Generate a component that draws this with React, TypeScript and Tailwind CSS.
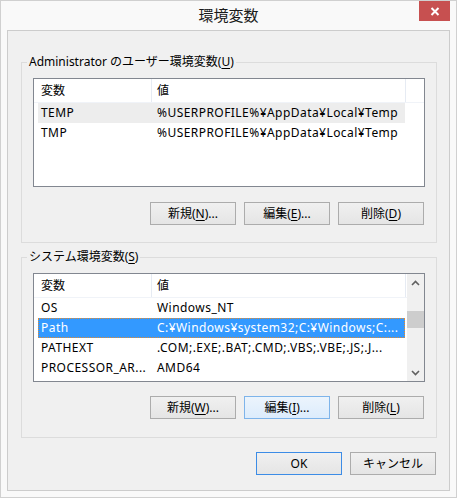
import React from 'react';

const font = { fontFamily: '"Noto Sans", "Noto Sans CJK JP", sans-serif' };

type Row = { name: string; value: string };

const userVars: Row[] = [
  { name: 'TEMP', value: '%USERPROFILE%¥AppData¥Local¥Temp' },
  { name: 'TMP', value: '%USERPROFILE%¥AppData¥Local¥Temp' },
];

const systemVars: Row[] = [
  { name: 'OS', value: 'Windows_NT' },
  { name: 'Path', value: 'C:¥Windows¥system32;C:¥Windows;C:...' },
  { name: 'PATHEXT', value: '.COM;.EXE;.BAT;.CMD;.VBS;.VBE;.JS;.J...' },
  { name: 'PROCESSOR_AR...', value: 'AMD64' },
  { name: 'PROCESSOR_ID...', value: 'Intel64 Family 6 Model 58 Stepping 9, ...' },
];

const Mn = ({ children }: { children: React.ReactNode }) => <span className="underline underline-offset-2">{children}</span>;

function Btn({ children, hover, primary }: { children: React.ReactNode; hover?: boolean; primary?: boolean }) {
  const look = hover
    ? 'border-[#7eb4ea] bg-gradient-to-b from-[#ecf4fc] to-[#dcecfc]'
    : primary
    ? 'border-[#3c8ce6] bg-gradient-to-b from-[#f0f0f0] to-[#e5e5e5]'
    : 'border-[#acacac] bg-gradient-to-b from-[#f0f0f0] to-[#e5e5e5]';
  return (
    <div className={`w-[86px] h-[23px] border ${look} flex items-center justify-center text-[12px] text-black`}>
      <span>{children}</span>
    </div>
  );
}

function GroupBox({ label, children, pb, gap }: { label: React.ReactNode; children: React.ReactNode; pb: string; gap: string }) {
  return (
    <div className={`relative border border-[#dcdcdc] px-[11px] pt-[15px] ${pb} flex flex-col ${gap}`}>
      <div className="absolute left-[5px] top-[-9px] bg-[#f0f0f0] px-[2px] leading-[16px] text-[12px] text-black">{label}</div>
      {children}
    </div>
  );
}

function Chevron({ up }: { up?: boolean }) {
  return (
    <svg width="9" height="6" viewBox="0 0 9 6">
      <path d={up ? 'M1 5 L4.5 1.5 L8 5' : 'M1 1 L4.5 4.5 L8 1'} fill="none" stroke="#606060" strokeWidth="1.6" />
    </svg>
  );
}

function ListView({ rows, selected, scroll }: { rows: Row[]; selected?: number; scroll?: boolean }) {
  return (
    <div className="h-[109px] border border-[#828790] bg-white flex overflow-hidden">
      <div className="flex-1 flex flex-col overflow-hidden">
        <div className="h-[24px] shrink-0 flex border-b border-[#f0f3f8] text-[12px] text-black">
          <div className="w-[118px] border-r border-[#e6ebf3] pl-[7px] flex items-center">変数</div>
          <div className="w-[254px] border-r border-[#e6ebf3] pl-[5px] flex items-center">値</div>
        </div>
        {rows.map((r, i) => {
          const sel = i === selected;
          const gray = !scroll && i === 0;
          return (
            <div
              key={r.name}
              className={`h-[20px] shrink-0 ml-[4px] w-[367px] flex items-center text-[12px] tracking-[0.45px] whitespace-nowrap ${
                sel ? 'bg-[#3399ff] text-white outline-1 outline-dotted outline-[#e38a2e] -outline-offset-1' : gray ? 'bg-[#ededed] text-black' : 'text-black'
              }`}
            >
              <div className="w-[114px] pl-[3px] overflow-hidden">{r.name}</div>
              <div className="pl-[5px] overflow-hidden">{r.value}</div>
            </div>
          );
        })}
      </div>
      {scroll && (
        <div className="w-[17px] shrink-0 bg-[#f0f0f0] flex flex-col">
          <div className="h-[17px] flex items-center justify-center"><Chevron up /></div>
          <div className="h-[20px]" />
          <div className="h-[17px] bg-[#cdcdcd]" />
          <div className="flex-1" />
          <div className="h-[17px] flex items-center justify-center"><Chevron /></div>
        </div>
      )}
    </div>
  );
}

export default function App() {
  return (
    <div style={font} className="w-[457px] h-[498px] bg-[#f9f9f9] border border-[#d0d0d0] flex flex-col">
      <div className="relative h-[29px] shrink-0 flex items-center justify-center">
        <span className="text-[15px] text-[#1a1a1a]">環境変数</span>
        <div className="absolute top-0 right-[6px] w-[31px] h-[20px] bg-[#c75050] flex items-center justify-center">
          <svg width="10" height="9" viewBox="0 0 10 9">
            <path d="M1.5 1 L8.5 8 M8.5 1 L1.5 8" stroke="white" strokeWidth="2" />
          </svg>
        </div>
      </div>
      <div className="mx-[6px] h-[461px] border border-[#cccccc] bg-[#f0f0f0] pl-[13px] pr-[12px] pt-[31px] flex flex-col">
        <GroupBox label={<>Administrator のユーザー環境変数(<Mn>U</Mn>)</>} pb="pb-[17px]" gap="gap-[15px]">
          <ListView rows={userVars} />
          <div className="flex justify-end gap-[8px] pr-[1px]">
            <Btn>新規(<Mn>N</Mn>)...</Btn>
            <Btn>編集(<Mn>E</Mn>)...</Btn>
            <Btn>削除(<Mn>D</Mn>)</Btn>
          </div>
        </GroupBox>
        <div className="h-[14px] shrink-0" />
        <GroupBox label={<>システム環境変数(<Mn>S</Mn>)</>} pb="pb-[18px]" gap="gap-[14px]">
          <ListView rows={systemVars} selected={1} scroll />
          <div className="flex justify-end gap-[8px] pr-[1px]">
            <Btn>新規(<Mn>W</Mn>)...</Btn>
            <Btn hover>編集(<Mn>I</Mn>)...</Btn>
            <Btn>削除(<Mn>L</Mn>)</Btn>
          </div>
        </GroupBox>
        <div className="flex justify-end gap-[8px] pr-[1px] mt-[14px]">
          <Btn primary>OK</Btn>
          <Btn>キャンセル</Btn>
        </div>
      </div>
    </div>
  );
}
